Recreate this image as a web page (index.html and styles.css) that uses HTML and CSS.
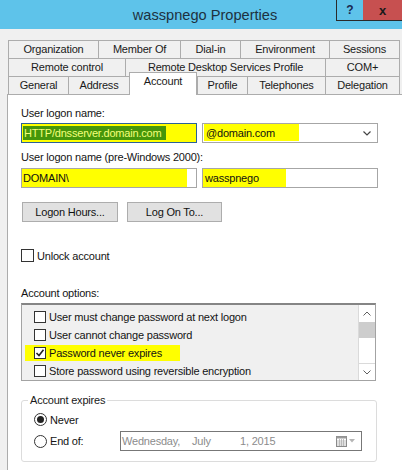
FILE: index.html
```html
<!DOCTYPE html>
<html>
<head>
<meta charset="utf-8">
<title>wasspnego Properties</title>
<link rel="stylesheet" href="styles.css">
</head>
<body>
<div class="window">
  <div class="titlebar">
    <div class="title">wasspnego Properties</div>
    <div class="caption-btns">
      <div class="cbtn help">?</div>
      <div class="cbtn close">x</div>
    </div>
  </div>

  <div class="tabs">
    <div class="tabrow row1">
      <div class="tab">Organization</div>
      <div class="tab">Member Of</div>
      <div class="tab">Dial-in</div>
      <div class="tab">Environment</div>
      <div class="tab">Sessions</div>
    </div>
    <div class="tabrow row2">
      <div class="tab">Remote control</div>
      <div class="tab">Remote Desktop Services Profile</div>
      <div class="tab">COM+</div>
    </div>
    <div class="tabrow row3">
      <div class="tab">General</div>
      <div class="tab">Address</div>
      <div class="tab active">Account</div>
      <div class="tab">Profile</div>
      <div class="tab">Telephones</div>
      <div class="tab">Delegation</div>
    </div>
  </div>

  <div class="panel">
    <div class="lbl">User logon name:</div>
    <div class="fields">
      <div class="input focused">
        <div class="fill full"><span class="sel">HTTP/dnsserver.domain.com</span></div>
      </div>
      <div class="input combo">
        <div class="fill combo-fill">@domain.com</div>
        <svg class="chev" width="8" height="5" viewBox="0 0 8 5"><polyline points="0.5,0.5 4,4 7.5,0.5" fill="none" stroke="#444" stroke-width="1.2"/></svg>
      </div>
    </div>

    <div class="lbl l2">User logon name (pre-Windows 2000):</div>
    <div class="fields f2">
      <div class="input">
        <div class="fill dom">DOMAIN\</div>
      </div>
      <div class="input">
        <div class="fill user">wasspnego</div>
      </div>
    </div>

    <div class="btns">
      <div class="btn">Logon Hours...</div>
      <div class="btn">Log On To...</div>
    </div>

    <div class="chkrow">
      <span class="cb"></span>
      <span>Unlock account</span>
    </div>

    <div class="lbl l3">Account options:</div>
    <div class="listbox">
      <div class="items">
        <div class="li"><span class="cb small"></span><span>User must change password at next logon</span></div>
        <div class="li"><span class="cb small"></span><span>User cannot change password</span></div>
        <div class="li hlrow">
          <div class="hlspan">
            <span class="cb small checked"><svg width="10" height="10" viewBox="0 0 10 10"><polyline points="1.5,5 4,7.5 8.5,1.8" fill="none" stroke="#222" stroke-width="1.6"/></svg></span>
            <span>Password never expires</span>
          </div>
        </div>
        <div class="li"><span class="cb small"></span><span>Store password using reversible encryption</span></div>
      </div>
      <div class="vscroll">
        <div class="sarrow up"><svg width="8" height="5" viewBox="0 0 8 5"><polyline points="0.5,4.5 4,1 7.5,4.5" fill="none" stroke="#606060" stroke-width="1"/></svg></div>
        <div class="thumb"></div>
        <div class="track"></div>
        <div class="sarrow down"><svg width="8" height="5" viewBox="0 0 8 5"><polyline points="0.5,0.5 4,4 7.5,0.5" fill="none" stroke="#606060" stroke-width="1"/></svg></div>
      </div>
    </div>

    <fieldset class="group">
      <legend>Account expires</legend>
      <div class="rrow r1">
        <span class="radio on"></span>
        <span class="rlabel">Never</span>
      </div>
      <div class="rrow r2">
        <span class="radio"></span>
        <span class="rlabel wide">End of:</span>
        <div class="date">
          <span class="d1">Wednesday,</span>
          <span class="d2">July</span>
          <span class="d3">1, 2015</span>
          <svg class="cal" width="11" height="11" viewBox="0 0 11 11">
            <rect x="0.5" y="0.5" width="10" height="10" fill="#fff" stroke="#8a8a8a"/>
            <rect x="0.5" y="0.5" width="10" height="2" fill="#9a9a9a"/>
            <path d="M3.5 3v7M5.5 3v7M7.5 3v7M1 5h9M1 7h9M1 9h9" stroke="#b0b0b0" stroke-width="0.8"/>
          </svg>
          <svg class="darrow" width="6" height="4" viewBox="0 0 6 4"><polygon points="0,0 6,0 3,3.5" fill="#b5b5b5"/></svg>
        </div>
      </div>
    </fieldset>
  </div>
</div>
</body>
</html>
```

FILE: styles.css
```css
* { box-sizing: border-box; }
html, body { margin: 0; padding: 0; }
body {
  width: 402px;
  height: 470px;
  overflow: hidden;
  background: #f0f0f0;
  font-family: "Liberation Sans", Arial, sans-serif;
  font-size: 11px;
  letter-spacing: -0.2px;
  color: #141414;
}
.window { display: flex; flex-direction: column; height: 470px; }

/* title bar */
.titlebar {
  flex: none;
  height: 29px;
  background: #5ec3ea;
  display: grid;
  grid-template-columns: 66px 1fr 66px;
}
.title {
  grid-column: 2;
  text-align: center;
  padding-left: 8px;
  font-size: 14.6px;
  letter-spacing: 0;
  line-height: 30px;
  color: #1d3140;
  white-space: nowrap;
}
.caption-btns { display: flex; align-items: flex-start; }
.cbtn {
  height: 21px;
  border-bottom: 1px solid #2a2a2a;
  display: flex;
  align-items: center;
  justify-content: center;
  font-weight: bold;
  letter-spacing: 0;
}
.help { width: 27px; border-left: 1px solid #2a2a2a; color: #1a2850; font-size: 12px; }
.close { width: 39px; background: #c75050; color: #1a1a1a; font-size: 13px; }

/* tabs */
.tabs { flex: none; margin: 11px 0 0 8px; width: 392px; }
.tabrow { display: grid; height: 18px; }
.row1 { grid-template-columns: 90px 82px 60px 89px 71px; }
.row2 { grid-template-columns: 117px 200px 75px; }
.row3 { grid-template-columns: 60px 61px 68px 50px 78px 75px; }
.tab {
  border-top: 1px solid #acacac;
  border-left: 1px solid #acacac;
  background: #f0f0f0;
  text-align: center;
  line-height: 17px;
  white-space: nowrap;
  color: #1a1a1a;
}
.tab:last-child { border-right: 1px solid #acacac; }
.tab.active {
  background: #fff;
  margin-top: -4px;
  margin-bottom: -1px;
  padding-top: 0;
  border-right: 1px solid #acacac;
  position: relative;
  z-index: 1;
}

/* panel */
.panel {
  flex: 1;
  margin-left: 7px;
  background: #fff;
  border-top: 1px solid #acacac;
  border-left: 1px solid #acacac;
  padding: 12px 0 0 13px;
}
.lbl { line-height: 13px; }
.lbl.l2 { margin-top: 8px; }
.lbl.l3 { margin-top: 25px; }

.fields { display: flex; gap: 5px; margin-top: 3px; }
.fields.f2 { margin-top: 4px; }
.input {
  width: 176px;
  height: 20px;
  border: 1px solid #a6a6a6;
  background: #fff;
  display: flex;
  align-items: flex-start;
  color: #111;
}
.input.focused { border-color: #2b6297; }
.fill { background: #ffff00; display: flex; align-items: center; white-space: nowrap; }
.fill.full { width: 100%; height: 100%; padding: 2px 0 0 1px; align-items: flex-start; }
.sel {
  display: block;
  width: 143px;
  height: 14px;
  line-height: 14px;
  background: #45960a;
  color: #f4ff7a;
  padding-left: 1px;
}
.input.combo { align-items: center; }
.combo-fill { align-self: flex-start; margin-left: 1px; width: 95px; height: 17px; padding-left: 2px; }
.chev { margin-left: auto; margin-right: 6px; }
.fill.dom { width: 165px; height: 18px; padding-left: 1px; }
.fill.user { width: 83px; height: 18px; padding-left: 2px; }

.btns { display: flex; gap: 9px; margin: 14px 0 0 1px; }
.btn {
  width: 96px;
  height: 20px;
  border: 1px solid #adadad;
  background: #e1e1e1;
  display: flex;
  align-items: center;
  justify-content: center;
  color: #111;
}
.btn + .btn { width: 95px; }

.chkrow { display: flex; align-items: center; gap: 3px; height: 13px; margin-top: 27px; }
.cb {
  flex: none;
  width: 13px;
  height: 13px;
  border: 1px solid #333;
  background: #fff;
  display: flex;
  align-items: center;
  justify-content: center;
}
.cb.small { width: 12px; height: 12px; }

/* list */
.listbox {
  margin-top: 3px;
  width: 355px;
  height: 78px;
  border: 1px solid #a3a3a3;
  border-top: 2px solid #858585;
  background: #f0f0f0;
  display: flex;
}
.items { flex: 1; padding-top: 3px; }
.li { height: 18px; display: flex; align-items: center; gap: 3px; padding-left: 12px; white-space: nowrap; }
.li.hlrow { padding-left: 3px; }
.hlspan {
  display: flex;
  align-items: center;
  gap: 3px;
  height: 16px;
  width: 155px;
  padding-left: 9px;
  background: #ffff00;
}
.vscroll {
  width: 17px;
  flex: none;
  background: #fff;
  border-left: 1px solid #dadada;
  display: flex;
  flex-direction: column;
}
.sarrow { height: 17px; display: flex; align-items: center; justify-content: center; }
.sarrow.down { border-top: 1px solid #dadada; }
.thumb { height: 16px; background: #cdcdcd; }
.track { flex: 1; }

/* group */
.group {
  margin: 12px 0 0 0;
  width: 356px;
  min-width: 0;
  border: 1px solid #dcdcdc;
  border-radius: 3px;
  padding: 0 0 10px 12px;
}
.group legend {
  margin-left: -6px;
  padding: 0 2px;
  line-height: 14px;
  color: #1a1a1a;
}
.rrow { display: flex; align-items: center; }
.rrow.r1 { height: 13px; margin-top: 6px; }
.rrow.r2 { height: 20px; margin-top: 5px; }
.radio {
  flex: none;
  width: 13px;
  height: 13px;
  border-radius: 50%;
  border: 1px solid #333;
  background: #fff;
  display: flex;
  align-items: center;
  justify-content: center;
}
.radio.on::after {
  content: "";
  width: 7px;
  height: 7px;
  border-radius: 50%;
  background: #222;
}
.rlabel { margin-left: 3px; }
.rlabel.wide { width: 70px; flex: none; }
.date {
  width: 242px;
  height: 20px;
  border: 1px solid #777;
  display: flex;
  align-items: center;
  padding-left: 1px;
  color: #8c8c8c;
  white-space: nowrap;
}
.d1 { width: 70px; }
.d2 { width: 48px; }
.cal { margin-left: auto; }
.darrow { margin: 0 6px 0 2px; }
```
